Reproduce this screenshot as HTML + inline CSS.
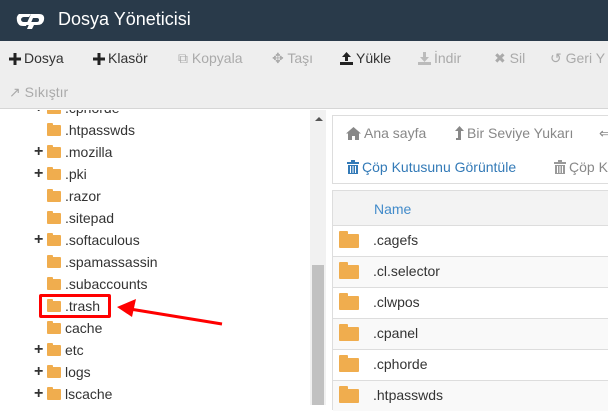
<!DOCTYPE html>
<html><head><meta charset="utf-8"><style>
*{margin:0;padding:0;box-sizing:border-box}
body{width:608px;height:405px;overflow:hidden;background:#fff;font-family:"Liberation Sans",sans-serif;position:relative}
.hdr{position:absolute;left:0;top:0;width:608px;height:41px;background:#293a4a;color:#fff}
.hdr .t{position:absolute;left:58px;top:9px;font-size:18px}
.tb{position:absolute;left:0;top:41px;width:608px;height:68px;background:#eeeeee;border-bottom:1px solid #d6d6d6;font-size:14px}
.tb span{position:absolute;top:9px;white-space:nowrap}
.dis{color:#aaa}
.tree{position:absolute;left:0;top:110px;width:310px;height:295px;overflow:hidden;font-size:14px;color:#333}
.tr{position:absolute;height:22px;line-height:22px}
.pl{position:absolute;left:34px;font-weight:bold;font-size:16px}
.fd{position:absolute;left:47px;top:6px;width:14px;height:11px;background:#f0ad4e;border-radius:1px}
.fd:before{content:"";position:absolute;left:0;top:-2px;width:6px;height:3px;background:#f0ad4e;border-radius:1px 1px 0 0}
.tx{position:absolute;left:65px}
.sb{position:absolute;left:310px;top:110px;width:16px;height:295px;background:#f1f1f1}
.panel{position:absolute;left:332px;top:115px;width:290px;height:69px;border:1px solid #ddd;font-size:14px}
.tbl{position:absolute;left:332px;top:190px;width:290px;height:220px;border-left:1px solid #ddd;border-top:1px solid #ddd;font-size:14px}
.row{position:absolute;left:0;width:290px;height:31px;border-top:1px solid #ddd}
.row .fd{left:6px;top:8px;width:20px;height:14px}
.row .fd:before{width:9px;top:-3px;height:4px}
.row .tx{left:40px;top:6px;color:#333}
.ic{display:inline-block;vertical-align:-2px;margin-right:3px}
</style></head><body>
<div class="hdr">
<svg style="position:absolute;left:16px;top:10px" width="32" height="20" viewBox="0 0 32 20"><path d="M3 4 Q0 6 1 11 Q2 16 7 16 H10 L12 12 H8 Q5 12 5 9 Q6 7 8 7 H13 L15 4 Z" fill="#fff"/><path d="M15 4 H23 Q29 4 28 10 Q27 15 21 15 H18 L16 19 H11 L14 12 H21 Q23 12 23 10 Q23 8 21 8 H17 L14 15 H10 Z" fill="#fff"/></svg>
<div class="t">Dosya Yöneticisi</div></div>
<div class="tb">
<span style="left:9px;color:#333"><svg class="ic" width="12" height="12"><path d="M4.5 0h3v4.5H12v3H7.5V12h-3V7.5H0v-3h4.5z" fill="#222"/></svg>Dosya</span>
<span style="left:93px;color:#333"><svg class="ic" width="12" height="12"><path d="M4.5 0h3v4.5H12v3H7.5V12h-3V7.5H0v-3h4.5z" fill="#222"/></svg>Klasör</span>
<span class="dis" style="left:178px">⧉ Kopyala</span>
<span class="dis" style="left:272px">✥ Taşı</span>
<span style="left:340px;color:#333"><svg class="ic" width="13" height="13"><path d="M6.5 0L11 5H8v4H5V5H2z M0 10h13v3H0z" fill="#222"/></svg>Yükle</span>
<span class="dis" style="left:418px"><svg class="ic" width="13" height="13"><path d="M5 0h3v5h3L6.5 10 2 5h3z M0 10h13v3H0z" fill="#bbb"/></svg>İndir</span>
<span class="dis" style="left:494px">✖ Sil</span>
<span class="dis" style="left:550px">↺ Geri Y</span>
<span class="dis" style="top:43px;left:9px">↗ Sıkıştır</span>
</div>
<div class="tree">
<div class="tr" style="top:-13px;width:300px"><span class="pl">+</span><span class="fd"></span><span class="tx">.cphorde</span></div>
<div class="tr" style="top:9px;width:300px"><span class="fd"></span><span class="tx">.htpasswds</span></div>
<div class="tr" style="top:31px;width:300px"><span class="pl">+</span><span class="fd"></span><span class="tx">.mozilla</span></div>
<div class="tr" style="top:53px;width:300px"><span class="pl">+</span><span class="fd"></span><span class="tx">.pki</span></div>
<div class="tr" style="top:75px;width:300px"><span class="fd"></span><span class="tx">.razor</span></div>
<div class="tr" style="top:97px;width:300px"><span class="fd"></span><span class="tx">.sitepad</span></div>
<div class="tr" style="top:119px;width:300px"><span class="pl">+</span><span class="fd"></span><span class="tx">.softaculous</span></div>
<div class="tr" style="top:141px;width:300px"><span class="fd"></span><span class="tx">.spamassassin</span></div>
<div class="tr" style="top:163px;width:300px"><span class="fd"></span><span class="tx">.subaccounts</span></div>
<div class="tr" style="top:185px;width:300px"><span class="fd"></span><span class="tx">.trash</span></div>
<div class="tr" style="top:207px;width:300px"><span class="fd"></span><span class="tx">cache</span></div>
<div class="tr" style="top:229px;width:300px"><span class="pl">+</span><span class="fd"></span><span class="tx">etc</span></div>
<div class="tr" style="top:251px;width:300px"><span class="pl">+</span><span class="fd"></span><span class="tx">logs</span></div>
<div class="tr" style="top:273px;width:300px"><span class="pl">+</span><span class="fd"></span><span class="tx">lscache</span></div>
</div>
<div class="sb"><div style="position:absolute;left:5px;top:7px;border-left:4px solid transparent;border-right:4px solid transparent;border-bottom:4px solid #555"></div><div style="position:absolute;left:2px;top:155px;width:12px;height:140px;background:#c1c1c1"></div></div>
<div style="position:absolute;left:39px;top:294px;width:72px;height:24px;border:3px solid #f00;border-radius:2px"></div>
<svg style="position:absolute;left:110px;top:295px" width="120" height="35"><line x1="112" y1="29" x2="20" y2="14" stroke="#f00" stroke-width="3"/><polygon points="7,12 26,4 22,22" fill="#f00"/></svg>
<div class="panel">
<span style="position:absolute;left:13px;top:9px;color:#888"><svg class="ic" width="15" height="13"><path d="M7.5 0L15 6.5h-2V13H9V9H6v4H2V6.5H0z" fill="#888"/></svg>Ana sayfa</span>
<span style="position:absolute;left:122px;top:9px;color:#888"><svg class="ic" width="9" height="14"><path d="M4.5 0L9 5H6v9H1v-2h2V5H0z" fill="#888"/></svg>Bir Seviye Yukarı</span>
<span style="position:absolute;left:266px;top:9px;color:#888">⇐</span>
<span style="position:absolute;left:14px;top:43px;color:#337ab7"><svg class="ic" width="12" height="14"><path d="M4 0h4v2h4v2H0V2h4z M1 5h10v9H1z" fill="#337ab7"/><path d="M3.5 6v7M6 6v7M8.5 6v7" stroke="#fff" stroke-width="1"/></svg>Çöp Kutusunu Görüntüle</span>
<span style="position:absolute;left:221px;top:43px;color:#888"><svg class="ic" width="12" height="14"><path d="M4 0h4v2h4v2H0V2h4z M1 5h10v9H1z" fill="#999"/><path d="M3.5 6v7M6 6v7M8.5 6v7" stroke="#fff" stroke-width="1"/></svg>Çöp K</span>
</div>
<div class="tbl">
<div style="position:absolute;left:0;top:0;width:290px;height:35px;background:#f3f3f3"><span style="position:absolute;left:41px;top:10px;color:#428bca">Name</span></div>
<div class="row" style="top:34px;background:#fff"><span class="fd"></span><span class="tx">.cagefs</span></div>
<div class="row" style="top:65px;background:#f9f9f9"><span class="fd"></span><span class="tx">.cl.selector</span></div>
<div class="row" style="top:96px;background:#fff"><span class="fd"></span><span class="tx">.clwpos</span></div>
<div class="row" style="top:127px;background:#f9f9f9"><span class="fd"></span><span class="tx">.cpanel</span></div>
<div class="row" style="top:158px;background:#fff"><span class="fd"></span><span class="tx">.cphorde</span></div>
<div class="row" style="top:189px;background:#f9f9f9"><span class="fd"></span><span class="tx">.htpasswds</span></div>
</div>
</body></html>
